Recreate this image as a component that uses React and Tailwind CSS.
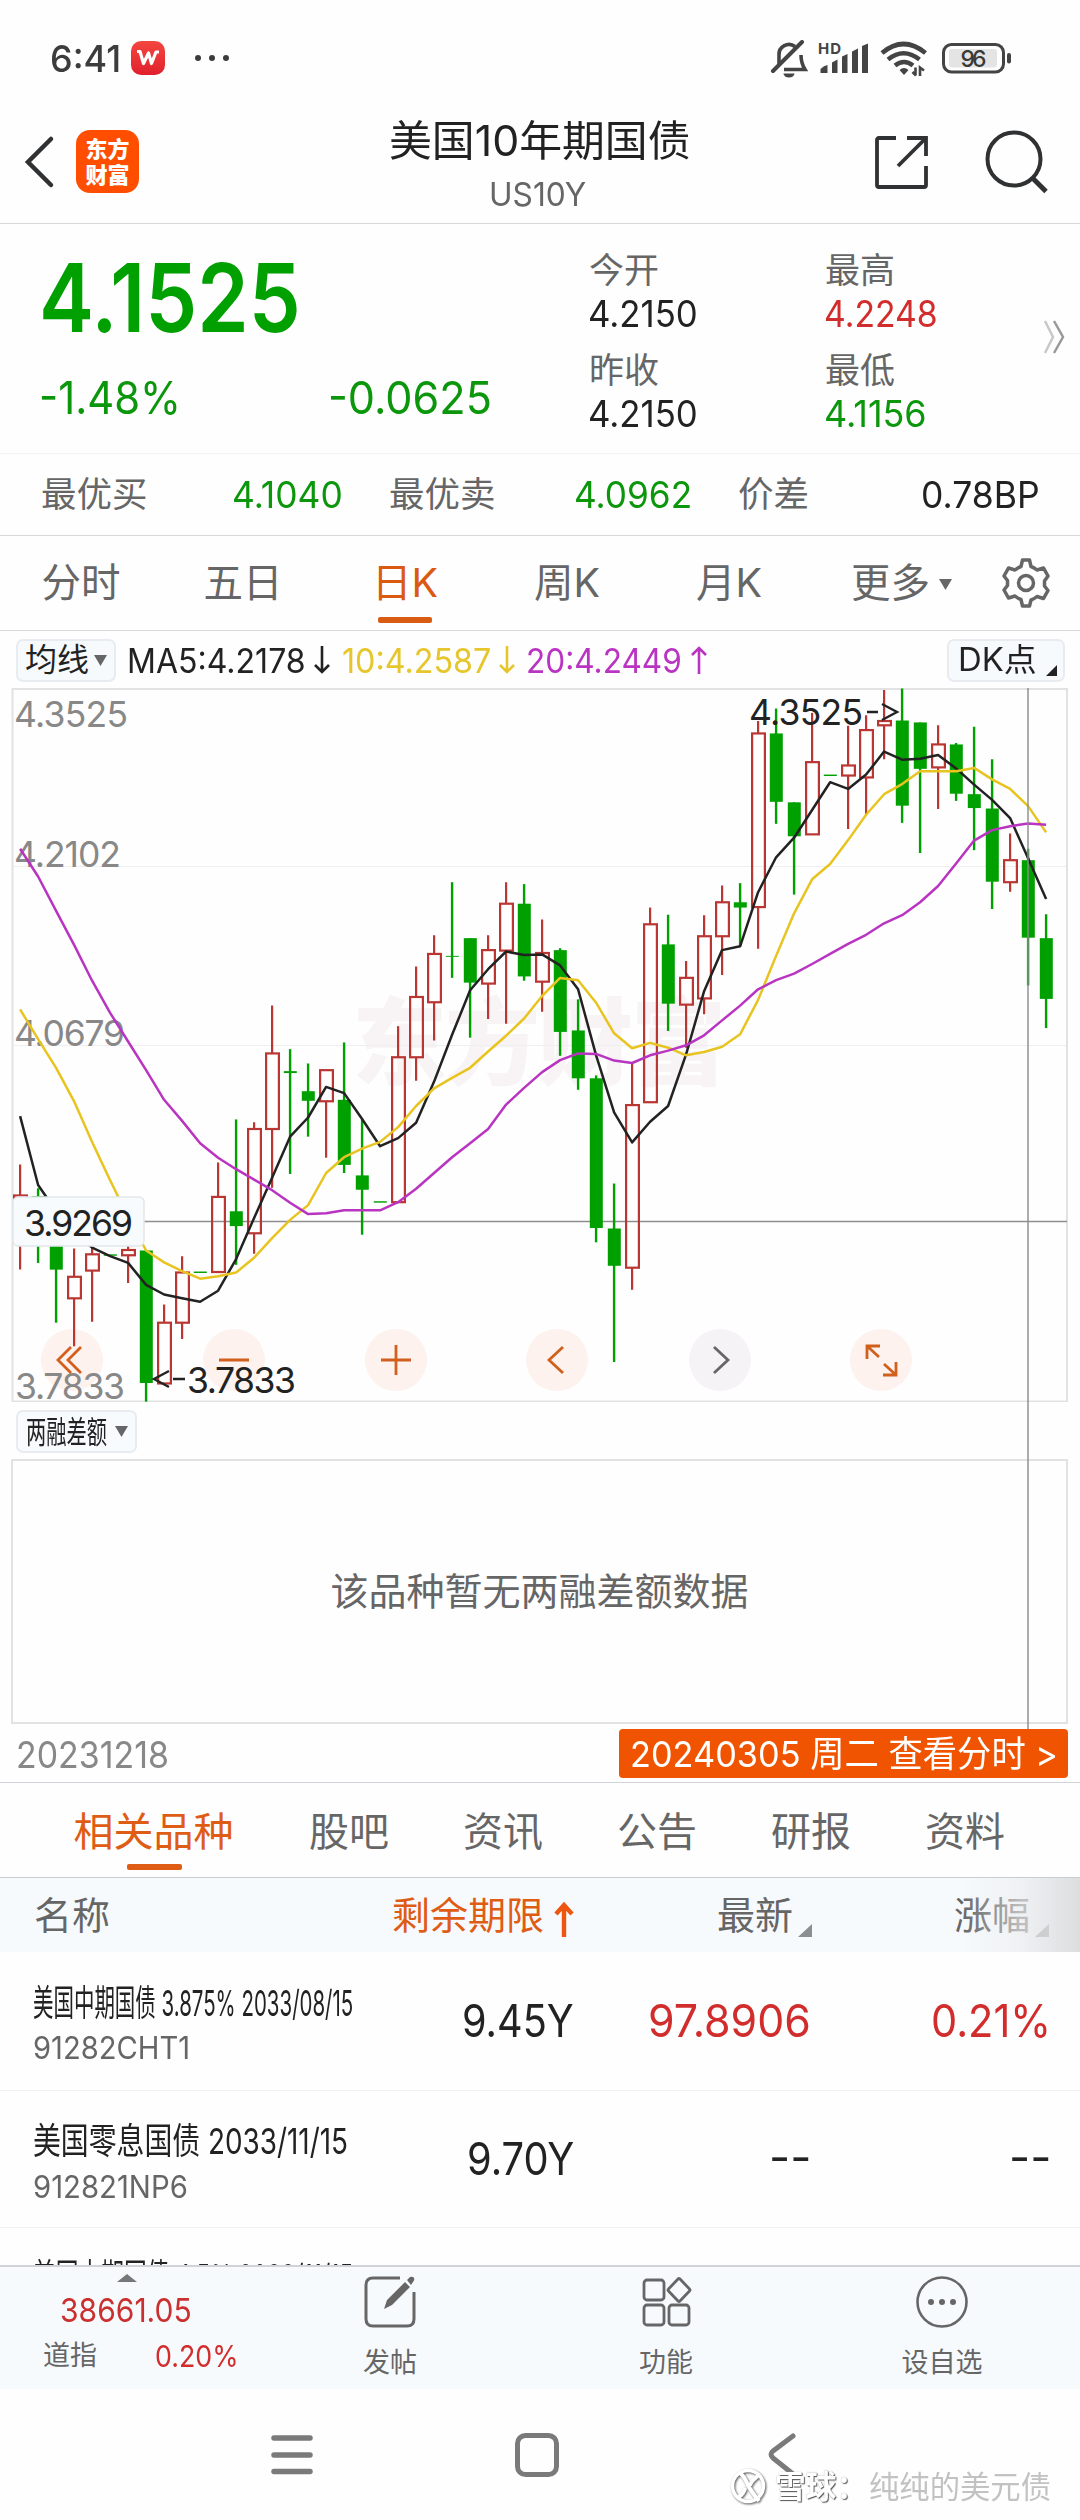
import { useLayoutEffect, useRef, useState } from "react";

// Each candle: [direction, high, low, bodyTop, bodyBottom] in plot units
const candles = [
    ["up", 1012, 1232, 1077, 1150],
    ["down", 1062, 1218, 1078, 1082],
    ["down", 1120, 1343, 1150, 1232],
    ["up", 1188, 1392, 1247, 1292],
    ["up", 1180, 1341, 1200, 1234],
    ["flat", 1201, 1201, 1200, 1203],
    ["up", 1180, 1260, 1191, 1202],
    ["down", 1192, 1508, 1192, 1469],
    ["up", 1305, 1470, 1343, 1470],
    ["up", 1204, 1377, 1238, 1343],
    ["flat", 1237, 1237, 1236, 1239],
    ["up", 1008, 1237, 1080, 1237],
    ["down", 918, 1222, 1110, 1141],
    ["up", 924, 1199, 938, 1156],
    ["up", 680, 1061, 780, 938],
    ["down", 771, 1032, 817, 821],
    ["down", 801, 954, 859, 879],
    ["up", 815, 998, 815, 880],
    ["down", 757, 1030, 877, 1013],
    ["down", 918, 1159, 1035, 1065],
    ["flat", 1090, 1090, 1089, 1092],
    ["up", 723, 1091, 788, 1091],
    ["up", 598, 837, 662, 788],
    ["up", 533, 753, 572, 673],
    ["down", 422, 622, 576, 578],
    ["down", 539, 747, 539, 632],
    ["up", 533, 708, 564, 634],
    ["up", 422, 718, 467, 565],
    ["down", 426, 628, 467, 619],
    ["up", 500, 693, 570, 630],
    ["down", 560, 785, 564, 735],
    ["down", 667, 856, 732, 832],
    ["down", 826, 1175, 832, 1145],
    ["down", 1052, 1425, 1146, 1224],
    ["up", 800, 1274, 888, 1228],
    ["up", 475, 882, 510, 882],
    ["down", 490, 733, 552, 676],
    ["up", 587, 768, 622, 678],
    ["up", 491, 698, 535, 665],
    ["up", 429, 616, 464, 535],
    ["down", 424, 555, 464, 475],
    ["up", 85, 561, 111, 474],
    ["down", 59, 300, 111, 254],
    ["down", 255, 448, 255, 326],
    ["up", 68, 322, 171, 322],
    ["flat", 198, 198, 197, 200],
    ["up", 95, 311, 178, 199],
    ["up", 73, 281, 104, 203],
    ["up", 20, 165, 85, 94],
    ["down", 17, 298, 84, 262],
    ["down", 88, 361, 88, 185],
    ["up", 94, 269, 134, 182],
    ["down", 131, 252, 134, 237],
    ["down", 97, 355, 238, 267],
    ["down", 165, 478, 268, 421],
    ["up", 320, 442, 376, 422],
    ["down", 352, 638, 376, 538],
    ["down", 489, 727, 539, 666],
];

const ma5 = [911, 1055, 1110, 1155, 1186, 1204, 1218, 1264, 1284, 1292, 1299, 1276, 1210, 1124, 1040, 954, 914, 850, 863, 917, 974, 957, 925, 839, 741, 648, 604, 567, 574, 573, 596, 646, 784, 903, 966, 923, 890, 782, 650, 564, 556, 443, 370, 329, 271, 213, 227, 197, 149, 166, 164, 156, 184, 218, 250, 288, 372, 457];
const ma10 = [688, 750, 810, 880, 965, 1045, 1122, 1192, 1217, 1235, 1251, 1246, 1238, 1207, 1166, 1128, 1097, 1030, 997, 979, 965, 934, 890, 853, 831, 810, 776, 743, 707, 660, 622, 627, 674, 738, 769, 758, 768, 784, 777, 766, 740, 668, 576, 487, 416, 384, 334, 281, 238, 217, 190, 190, 190, 183, 207, 227, 263, 318];
const ma20 = [352, 410, 482, 553, 628, 695, 755, 815, 877, 921, 968, 998, 1022, 1044, 1066, 1092, 1116, 1114, 1108, 1108, 1108, 1091, 1063, 1030, 997, 968, 938, 887, 852, 819, 794, 780, 781, 795, 800, 784, 774, 763, 742, 711, 680, 646, 627, 613, 593, 572, 551, 532, 508, 491, 464, 430, 383, 335, 313, 305, 299, 302];

const plotX = (i) => 20.1 + i * 18;
const plotY = (v) => (v - 16) / 2.0907;
const toPoints = (list) =>
    list.map((v, i) => `${plotX(i)},${plotY(v).toFixed(1)}`).join(" ");

// Squeezes one line of text into the width of its box
function Fit({ className = "", children }) {
    const box = useRef(null);
    const text = useRef(null);
    const [scale, setScale] = useState(1);

    useLayoutEffect(() => {
        setScale(box.current.clientWidth / text.current.offsetWidth);
    }, [children]);

    return (
        <div ref={box} className={`shrink-0 whitespace-nowrap ${className}`}>
            <span
                ref={text}
                className="inline-block origin-left"
                style={{ transform: `scaleX(${scale})` }}
            >
                {children}
            </span>
        </div>
    );
}

function StatusBar() {
    return (
        <div className="h-[100px] pt-4 flex items-center text-[#3c3c3c]">
            <Fit className="ml-[50px] mt-px w-[71px] text-[37px] font-medium">6:41</Fit>
            <div className="ml-[10px] w-[34px] h-[34px] rounded-[10px] bg-linear-to-b from-[#f4453f] to-[#e01f2d] flex items-center justify-center">
                <svg width="24" height="18" viewBox="0 0 24 18" fill="none" stroke="#fff" strokeWidth="3.2" strokeLinejoin="round">
                    <path d="M1 2.500h3l3.500 12 5-10.500 3 10.500L20 3h3" />
                </svg>
            </div>
            <div className="ml-[30px] flex gap-[8px]">
                <div className="w-[6px] h-[6px] rounded-full bg-[#3c3c3c]" />
                <div className="w-[6px] h-[6px] rounded-full bg-[#3c3c3c]" />
                <div className="w-[6px] h-[6px] rounded-full bg-[#3c3c3c]" />
            </div>

            <svg className="ml-auto mr-[68px] mt-[5px]" width="242" height="42" viewBox="0 0 242 42" fill="none" stroke="#444" strokeWidth="4">
                {/* muted bell */}
                <path d="M9 25.500v-10.500a10 10 0 0 1 16-8.500M31 15q0 8 4 14.500H14" strokeWidth="3.600" />
                <path d="M3 31 32 2" strokeWidth="4" strokeLinecap="round" />
                <path d="M13.500 33.500h11a5.500 4 0 0 1-11 0z" fill="#444" stroke="none" />
                {/* signal */}
                <g fill="#444" stroke="none">
                    <path d="M50.500 33v-4q3.500-3.500 7-4v8zM62 33V22.500l5.500-3V33zM72 33V16.500l5.500-2.500V33zM82 33V11.500l6-3V33zM92 33V6l6-2.500V33z" />
                </g>
                <text x="48" y="13.500" fontSize="15" fontWeight="700" fill="#444" stroke="none" textLength="23">HD</text>
                {/* wifi */}
                <path d="M112 13q21.500-18 43.500 0M118 19.500q15.500-12.500 31.500 0M125 25.500q9-7 18 0" strokeWidth="4.600" />
                <path d="M129.500 30q4.500-4 9 0l-4.500 5z" fill="#444" stroke="none" />
                <path d="M145.500 27.500v8M142.500 32l3.500 3.500M150 36v-8.500l4 3" strokeWidth="2.600" />
                {/* battery */}
                <rect x="173.500" y="4.500" width="60" height="27.500" rx="8" strokeWidth="3" />
                <rect x="179" y="9" width="48" height="18.500" rx="3" fill="#e4e4e4" stroke="none" />
                <rect x="237" y="13" width="4" height="10.500" rx="2" fill="#444" stroke="none" />
                <text x="190.500" y="26.500" fontSize="23" fontWeight="500" fill="#3a3a3a" stroke="none" textLength="26">96</text>
            </svg>
        </div>
    );
}

function Header() {
    return (
        <div className="h-[124px] border-b border-[#d8d8d8] flex items-center">
            <div className="w-[200px] flex items-center">
                <svg className="ml-[22px]" width="34" height="54" viewBox="0 0 34 54" fill="none" stroke="#303133" strokeWidth="4.500" strokeLinecap="round">
                    <path d="M29 4 6 27l23 23" />
                </svg>
                <div className="ml-[20px] w-[63px] h-[63px] rounded-[14px] bg-[#ff4e00] text-white font-black text-[22px] leading-[26px] flex flex-col items-center justify-center">
                    <span>东方</span>
                    <span>财富</span>
                </div>
            </div>
            <div className="flex-1 mt-[11px] flex flex-col items-center">
                <Fit className="w-[302px] text-[42px] leading-[54px] text-[#222]">
                    美国10年期国债
                </Fit>
                <Fit className="mr-[6px] w-[97px] text-[33px] leading-[53px] text-[#666]">
                    US10Y
                </Fit>
            </div>
            <div className="w-[200px] flex items-center">
                <svg className="shrink-0 -ml-[6px]" width="54" height="54" viewBox="0 0 54 54" fill="none" stroke="#303133" strokeWidth="3.800">
                    <path d="M22 3H5q-2 0-2 2v45q0 2 2 2h45q2 0 2-2V31" />
                    <path d="M33 3h19v18M51 4 24 31" />
                </svg>
                <svg className="shrink-0 ml-[57px]" width="64" height="64" viewBox="0 0 64 64" fill="none" stroke="#303133" strokeWidth="4">
                    <circle cx="29" cy="29" r="26.500" />
                    <path d="m47.500 48 13.500 13.500" strokeWidth="5" />
                </svg>
            </div>
        </div>
    );
}

function Stat({ label, value, className }) {
    return (
        <div>
            <div className="pt-px text-[35px] leading-[43px] text-[#666]">{label}</div>
            <Fit className={`-ml-px text-[37px] leading-[43px] ${className}`}>{value}</Fit>
        </div>
    );
}

function Quote() {
    return (
        <div>
            <div className="h-[230px] border-b border-[#f3f3f3] flex">
                <div className="w-[589px] pl-[39px]">
                    <Fit className="w-[262px] text-[95px] leading-[147px] font-semibold text-[#00a000]">
                        4.1525
                    </Fit>
                    <div className="flex text-[45px] leading-[53px] text-[#0b960b]">
                        <Fit className="w-[142px]">-1.48%</Fit>
                        <Fit className="ml-[147px] w-[164px]">-0.0625</Fit>
                    </div>
                </div>
                <div className="pt-[24px] grid grid-cols-[236px_140px] gap-y-[13px] content-start">
                    <Stat label="今开" value="4.2150" className="w-[110px] text-[#222]" />
                    <Stat label="最高" value="4.2248" className="w-[114px] text-[#d22d2d]" />
                    <Stat label="昨收" value="4.2150" className="w-[110px] text-[#222]" />
                    <Stat label="最低" value="4.1156" className="w-[103px] text-[#0b960b]" />
                </div>
                <svg className="ml-[78px] mt-[96px]" width="24" height="34" viewBox="0 0 24 34" fill="none" strokeWidth="2.500">
                    <path d="m2 1 8 16-8 16" stroke="#c8c8c8" />
                    <path d="m11 1 9 16-9 16" stroke="#999" />
                </svg>
            </div>
            <div className="h-[82px] border-b border-[#d8d8d8] flex items-center text-[35.5px] text-[#666]">
                <span className="ml-[41px] w-[107px]">最优买</span>
                <Fit className="ml-[84px] w-[111px] text-[37px] text-[#0b960b]">4.1040</Fit>
                <span className="ml-[46px] w-[107px]">最优卖</span>
                <Fit className="ml-[78px] w-[118px] text-[37px] text-[#0b960b]">4.0962</Fit>
                <span className="ml-[46px] w-[71px]">价差</span>
                <Fit className="ml-[112px] w-[119px] text-[37px] text-[#222]">0.78BP</Fit>
            </div>
        </div>
    );
}

function Triangle({ className }) {
    return (
        <svg className={className} width="13" height="11" viewBox="0 0 13 11" fill="currentColor">
            <path d="M0 0h13L6.500 11z" />
        </svg>
    );
}

function PeriodTabs() {
    const tabs = ["分时", "五日", "日K", "周K", "月K"];

    return (
        <div className="h-[95px] border-b border-[#d8d8d8] flex items-center text-[39.5px] text-[#666]">
            {tabs.map((tab) => (
                <div
                    key={tab}
                    className={`relative w-[162px] h-full pt-[2px] flex items-center justify-center ${tab === "日K" ? "text-[#d95a10]" : ""}`}
                >
                    {tab}
                    {tab === "日K" && (
                        <div className="absolute bottom-[7px] left-[54px] w-[54px] h-[6px] rounded-[2px] bg-[#d95c14]" />
                    )}
                </div>
            ))}
            <div className="w-[162px] pt-[2px] pl-[41px] flex items-center">
                更多
                <Triangle className="ml-[9px] text-[#666]" />
            </div>
            <svg className="ml-[28px]" width="52" height="52" viewBox="0 0 52 52" fill="none" stroke="#666" strokeWidth="3.500" strokeLinejoin="round">
                <path d="M22.500 3h7l1.500 6.500q3 1 6 3.500l6.500-2 4.500 8-3.500 5v5l3.500 4.500-4.500 8-6.500-2q-3 2.500-6 3.500L29.500 49h-7L21 42.500q-3-1-6-3.500l-6.500 2-4.500-8L7.500 28.500v-5L4 19l4.500-8 6.500 2q3-2.500 6-3.500z" />
                <circle cx="26" cy="26" r="7.500" />
            </svg>
        </div>
    );
}

function Arrow({ up, className }) {
    return (
        <svg className={`shrink-0 ${className}`} width="16" height="28" viewBox="0 0 16 28" fill="none" stroke="currentColor" strokeWidth="2.600">
            <path d={up ? "M8 28V2M1 9l7-7 7 7" : "M8 0v26M1 19l7 7 7-7"} />
        </svg>
    );
}

function IndicatorRow() {
    return (
        <div className="h-[57px] pt-px flex items-center text-[34px]">
            <div className="ml-[16px] w-[100px] h-[43px] rounded-[7px] border-2 border-[#e8ecf1] bg-[#f6fafd] flex items-center text-[32px] text-[#222]">
                <span className="ml-[7px] w-[64px]">均线</span>
                <Triangle className="ml-[5px] text-[#666]" />
            </div>
            <Fit className="ml-[11px] w-[179px] text-[#222]">MA5:4.2178</Fit>
            <Arrow className="ml-[8px] text-[#222]" />
            <Fit className="ml-[12px] w-[149px] text-[#e6c62c]">10:4.2587</Fit>
            <Arrow className="ml-[8px] text-[#e6c62c]" />
            <Fit className="ml-[11px] w-[156px] text-[#b934c1]">20:4.2449</Fit>
            <Arrow up className="ml-[9px] text-[#b934c1]" />
            <div className="ml-auto mr-[15px] w-[118px] h-[43px] rounded-[7px] border-2 border-[#e8ecf1] bg-[#f6fafd] flex items-center text-[32px] text-[#222]">
                <Fit className="ml-[9px] w-[79px]">DK点</Fit>
                <svg className="ml-[9px] mt-[20px]" width="11" height="11" viewBox="0 0 11 11" fill="#222">
                    <path d="M11 0v11H0z" />
                </svg>
            </div>
        </div>
    );
}

function Candle({ index, data }) {
    const [kind, high, low, top, bottom] = data;
    const x = plotX(index);
    const h = plotY(bottom) - plotY(top);

    if (kind === "up") {
        return (
            <g stroke="#b93632" strokeWidth="2.200" fill="none">
                <path d={`M${x} ${plotY(high)}V${plotY(top)}M${x} ${plotY(bottom)}V${plotY(low)}`} />
                <rect x={x - 6} y={plotY(top)} width="12.800" height={h} />
            </g>
        );
    }

    return (
        <g fill="#00a000">
            <rect x={x - 1.2} y={plotY(high)} width="2.400" height={plotY(low) - plotY(high)} />
            <rect x={x - 6.300} y={plotY(top)} width="13" height={h} />
        </g>
    );
}

function CandleChart() {
    return (
        <svg className="block" width="1080" height="714" viewBox="0 0 1080 714">
            <defs>
                <clipPath id="plot">
                    <rect x="13" y="0" width="1054" height="714" />
                </clipPath>
            </defs>

            <text x="352" y="390" fontSize="95" fontWeight="900" fill="#f8f4f5" textLength="374">东方财富</text>

            <path d="M13 178.500H1067M13 357.500H1067" stroke="#efefef" strokeWidth="1" />
            <rect x="12.500" y="1" width="1054.500" height="712.500" fill="none" stroke="#e2e2e2" strokeWidth="2" />

            {/* Chart buttons */}
            <g fill="#fdf2ee">
                <circle cx="72" cy="672" r="31" />
                <circle cx="234" cy="672" r="31" />
                <circle cx="396" cy="672" r="31" />
                <circle cx="557" cy="672" r="31" />
                <circle cx="720" cy="672" r="31" fill="#f5f3f5" />
                <circle cx="881" cy="672" r="31" />
            </g>

            <path d="M13 533.500H1067" stroke="#8f8f8f" strokeWidth="1.500" />

            <g fill="#888" fontSize="35.500">
                <text x="14" y="38.500" textLength="114">4.3525</text>
                <text x="14" y="179" textLength="107">4.2102</text>
                <text x="14" y="357.500" textLength="111">4.0679</text>
                <text x="15" y="711" textLength="110">3.7833</text>
            </g>

            <g clipPath="url(#plot)">
                {candles.map((c, i) => (
                    <Candle key={i} index={i} data={c} />
                ))}
            </g>

            <g fill="none" strokeWidth="2.500" strokeLinejoin="round">
                <polyline points={toPoints(ma5)} stroke="#222" />
                <polyline points={toPoints(ma10)} stroke="#e8c420" />
                <polyline points={toPoints(ma20)} stroke="#b934c1" />
            </g>

            <g fill="none" stroke="#d2601c" strokeWidth="2.800">
                <path d="M71 659 58 672l13 13M81 659 68 672l13 13" />
                <path d="M219 672h30M381 672h30M396 657v30M563 659l-14 13 14 13" />
                <path d="M714 659l14 13-14 13" stroke="#666" />
                <path d="M867 671v-13h13M867 658l12 11M896 674v13h-13M896 687l-12-11" />
            </g>

            <g fill="#222" fontSize="35.500">
                <text x="749" y="37" textLength="114">4.3525</text>
                <text x="187" y="705" textLength="109">3.7833</text>
            </g>
            <g fill="none" stroke="#222" strokeWidth="2.400">
                <path d="M867 24h11M882 16l15 8-15 8" />
                <path d="M185 691h-12M169 683l-15 8 15 8" />
            </g>

            {/* Crosshair price */}
            <rect x="13" y="509" width="131" height="49" rx="5" fill="#f7fbfe" stroke="#e2e7ec" strokeWidth="1.500" />
            <text x="24" y="547.500" fontSize="35.500" fill="#222" textLength="109">3.9269</text>
        </svg>
    );
}

function ChartSection() {
    return (
        <div className="relative">
            <CandleChart />
            <div className="h-[57px] pt-[8px]">
                <div className="ml-[16px] w-[121px] h-[43px] rounded-[7px] border-2 border-[#e8ecf1] bg-[#f8fbfd] flex items-center text-[31px] leading-[39px] text-[#222]">
                    <Fit className="ml-[8px] w-[81px]">两融差额</Fit>
                    <Triangle className="ml-[8px] text-[#666]" />
                </div>
            </div>
            <div className="ml-[11px] mr-[12px] h-[265px] border-2 border-[#e2e2e2] flex items-center justify-center text-[38px] text-[#666]">
                该品种暂无两融差额数据
            </div>
            <div className="absolute top-0 left-[1027px] w-[2px] h-[1042px] bg-[#8a8a8e]/70" />
            <div className="relative h-[59px] border-b border-[#d0d4d8] flex items-center">
                <Fit className="ml-[16px] mt-[3px] w-[153px] text-[37px] text-[#888]">20231218</Fit>
                <div className="ml-auto mr-[12px] mt-px w-[449px] h-[49px] rounded-[4px] bg-[#f05400] text-white flex items-center justify-center">
                    <Fit className="mt-px w-[428px] text-[36px]">20240305 周二 查看分时 &gt;</Fit>
                </div>
            </div>
        </div>
    );
}

function InfoTabs() {
    const tabs = ["股吧", "资讯", "公告", "研报", "资料"];

    return (
        <div className="h-[95px] border-b border-[#c8cdd2] pl-[35px] flex text-[40px] leading-[97px] text-[#666] text-center">
            <div className="relative w-[237px] text-[#df5c14]">
                相关品种
                <div className="absolute bottom-[7px] left-[92px] w-[55px] h-[6px] rounded-[2px] bg-[#df5c14]" />
            </div>
            {tabs.map((tab) => (
                <div key={tab} className="w-[154px]">{tab}</div>
            ))}
        </div>
    );
}

function Corner({ className }) {
    return (
        <svg className={className} width="14" height="13" viewBox="0 0 14 13" fill="#8c8f92">
            <path d="M14 0v13H0z" />
        </svg>
    );
}

function BondTable() {
    return (
        <div className="h-[387px] overflow-hidden">
            <div className="relative h-[74px] bg-[#f6fafd] flex items-center text-[38px] text-[#666]">
                <span className="ml-[34px] w-[76px]">名称</span>
                <span className="ml-[282px] w-[153px] text-[#df5c14]">剩余期限</span>
                <svg className="ml-[9px] mt-[8px]" width="20" height="36" viewBox="0 0 20 36" fill="none" stroke="#ee5510" strokeWidth="4.400">
                    <path d="M10 36V3M2 13l8-9 8 9" />
                </svg>
                <span className="ml-[143px] w-[76px]">最新</span>
                <Corner className="ml-[5px] mt-[31px]" />
                <span className="ml-[142px] w-[76px]">涨幅</span>
                <Corner className="ml-[5px] mt-[31px]" />
                <div className="absolute right-0 top-0 w-[118px] h-full bg-linear-to-r from-[#f2f2f4]/0 via-[#ececee]/65 to-[#dadadc]/90" />
            </div>

            <div className="h-[139px] border-b border-[#f1f1f1] grid grid-cols-[376px_198px_237px_240px] text-[45px] text-[#222]">
                <div className="pl-[33px] pt-[28px]">
                    <Fit className="w-[320px] text-[36px] leading-[46px]">
                        美国中期国债 3.875% 2033/08/15
                    </Fit>
                    <Fit className="w-[157px] text-[31px] leading-[44px] text-[#666]">91282CHT1</Fit>
                </div>
                <Fit className="ml-auto w-[112px] leading-[138px]">9.45Y</Fit>
                <Fit className="ml-auto w-[163px] leading-[138px] text-[#d22d2d]">97.8906</Fit>
                <Fit className="ml-auto w-[120px] leading-[138px] text-[#d22d2d]">0.21%</Fit>
            </div>

            <div className="h-[137px] border-b border-[#f1f1f1] grid grid-cols-[376px_198px_237px_240px] text-[45px] text-[#222]">
                <div className="pl-[33px] pt-[27px]">
                    <Fit className="w-[315px] text-[36px] leading-[46px]">
                        美国零息国债 2033/11/15
                    </Fit>
                    <Fit className="w-[155px] text-[31px] leading-[46px] text-[#666]">912821NP6</Fit>
                </div>
                <Fit className="ml-auto w-[107px] leading-[136px]">9.70Y</Fit>
                <Fit className="ml-auto w-[42px] leading-[131px]">--</Fit>
                <Fit className="ml-auto w-[42px] leading-[131px]">--</Fit>
            </div>

            <div className="pl-[33px] pt-[26px] text-[#222]">
                <Fit className="w-[320px] text-[36px] leading-[46px]">
                    美国中期国债 4.5% 2033/11/15
                </Fit>
            </div>
        </div>
    );
}

function BottomBar() {
    return (
        <div className="h-[124px] border-t-2 border-[#d0d3da] bg-[#f6fafd] flex text-[27px] text-[#666]">
            <div className="w-[252px]">
                <svg className="ml-[117px] mt-[7px] mb-[8px]" width="20" height="8" viewBox="0 0 20 8" fill="#777">
                    <path d="M10 0l10 8H0z" />
                </svg>
                <Fit className="ml-[60px] w-[132px] text-[33px] leading-[41px] text-[#c9302f]">38661.05</Fit>
                <div className="mt-[5px] flex items-center leading-[40px]">
                    <span className="ml-[43px] w-[54px]">道指</span>
                    <Fit className="ml-[58px] w-[84px] text-[30px] text-[#d22d2d]">0.20%</Fit>
                </div>
            </div>
            <div className="w-[276px] pt-[8px] flex flex-col items-center">
                <svg width="54" height="54" viewBox="0 0 54 54" fill="none" stroke="#666" strokeWidth="3">
                    <path d="M37 3H10q-7 0-7 7v34q0 7 7 7h34q7 0 7-7V17" />
                    <path d="M21 34l3-9L42 7l5 5-18 18z M44 5l3-3q3-1 4 1t-1 4l-2 3z" fill="#666" stroke="none" />
                </svg>
                <div className="mt-[14px] leading-[40px]">发帖</div>
            </div>
            <div className="w-[276px] pt-[8px] flex flex-col items-center">
                <svg width="54" height="54" viewBox="0 0 54 54" fill="none" stroke="#666" strokeWidth="2.800">
                    <rect x="5" y="5" width="20" height="20" rx="3" />
                    <rect x="5" y="30" width="20" height="20" rx="3" />
                    <rect x="30" y="30" width="20" height="20" rx="3" />
                    <path d="M39 4q1-1 2 0l9.500 10q1 1 0 2L41 26q-1 1-2 0l-9.500-10q-1-1 0-2z" />
                </svg>
                <div className="mt-[14px] leading-[40px]">功能</div>
            </div>
            <div className="w-[276px] pt-[8px] flex flex-col items-center">
                <svg width="54" height="54" viewBox="0 0 54 54" fill="none" stroke="#666" strokeWidth="2.600">
                    <circle cx="27" cy="27" r="24.500" />
                    <g fill="#666" stroke="none">
                        <circle cx="16" cy="27" r="3" />
                        <circle cx="27" cy="27" r="3" />
                        <circle cx="38" cy="27" r="3" />
                    </g>
                </svg>
                <div className="mt-[14px] leading-[40px]">设自选</div>
            </div>
        </div>
    );
}

function SystemNav() {
    return (
        <div className="relative h-[131px] flex">
            <svg className="ml-[269px] mt-[43px]" width="46" height="46" viewBox="0 0 46 46" stroke="#7a7a7a" strokeWidth="5.500" strokeLinecap="round">
                <path d="M5 6h36M5 23h36M5 39.500h36" />
            </svg>
            <svg className="ml-[198px] mt-[43px]" width="48" height="46" viewBox="0 0 48 46" fill="none" stroke="#7a7a7a" strokeWidth="5">
                <rect x="4.500" y="3.500" width="39" height="39" rx="8" />
            </svg>
            <svg className="ml-[203px] mt-[43px]" width="36" height="48" viewBox="0 0 36 48" fill="none" stroke="#7a7a7a" strokeWidth="5" strokeLinecap="round" strokeLinejoin="round">
                <path d="M29 4 9 19q-4 3 0 7l20 16" />
            </svg>

            {/* Watermark */}
            <div className="absolute left-[729px] top-[78px] flex items-center text-white">
                <svg className="drop-shadow-[1px_1px_1px_#555]" width="40" height="40" viewBox="0 0 40 40" fill="none" stroke="#fff">
                    <circle cx="19" cy="19" r="15.500" strokeWidth="3.500" />
                    <path d="M10 5q5 4 8 11t12 18M30 8q-9 7-9 11M16 21q-1 5-6 9" strokeWidth="4" />
                </svg>
                <Fit className="ml-[6px] w-[92px] text-[32px] leading-[40px] font-bold [text-shadow:1px_1px_1px_#555,0_0_1px_#999]">
                    雪球：
                </Fit>
                <Fit className="ml-[2px] w-[182px] text-[31px] leading-[40px] text-[#c2c2c2] [text-shadow:-1px_-1px_0_#fff]">
                    纯纯的美元债
                </Fit>
            </div>
        </div>
    );
}

function App() {
    return (
        <div className="w-[1080px] h-[2520px] overflow-hidden bg-[#fefefe] font-['Inter','Noto_Sans_CJK_SC',sans-serif]">
            <StatusBar />
            <Header />
            <Quote />
            <PeriodTabs />
            <IndicatorRow />
            <ChartSection />
            <InfoTabs />
            <BondTable />
            <BottomBar />
            <SystemNav />
        </div>
    );
}

export default App;
